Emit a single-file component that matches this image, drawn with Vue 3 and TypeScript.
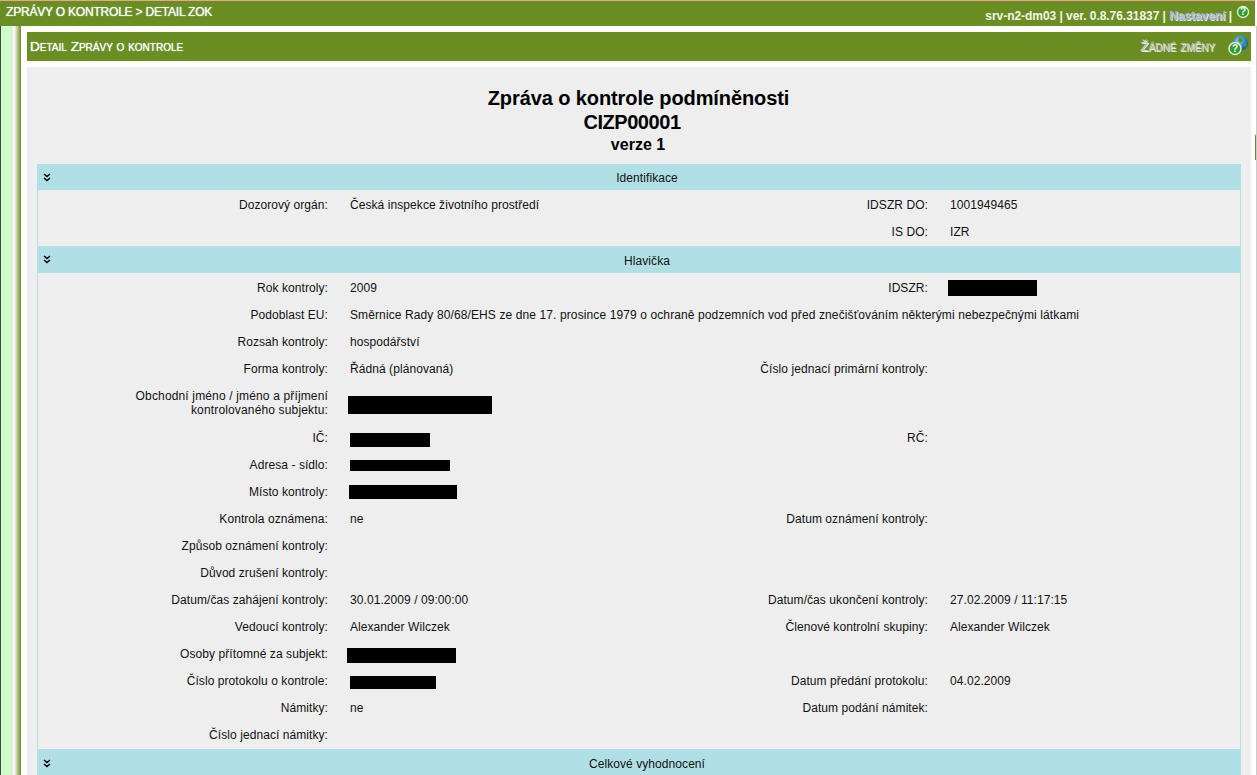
<script setup lang="ts">
interface Field {
  label: string
  value?: string
  black?: number[]
  label2?: string
  value2?: string
  black2?: number[]
  tall?: boolean
  wide?: boolean
}
interface Section {
  title: string
  rows: Field[]
}

const sections: Section[] = [
  {
    title: 'Identifikace',
    rows: [
      { label: 'Dozorový orgán:', value: 'Česká inspekce životního prostředí', label2: 'IDSZR DO:', value2: '1001949465' },
      { label: '', label2: 'IS DO:', value2: 'IZR' }
    ]
  },
  {
    title: 'Hlavička',
    rows: [
      { label: 'Rok kontroly:', value: '2009', label2: 'IDSZR:', black2: [89, 16, -2, 0] },
      { label: 'Podoblast EU:', wide: true, value: 'Směrnice Rady 80/68/EHS ze dne 17. prosince 1979 o ochraně podzemních vod před znečišťováním některými nebezpečnými látkami' },
      { label: 'Rozsah kontroly:', value: 'hospodářství' },
      { label: 'Forma kontroly:', value: 'Řádná (plánovaná)', label2: 'Číslo jednací primární kontroly:' },
      { label: 'Obchodní jméno / jméno a příjmení kontrolovaného subjektu:', tall: true, black: [144, 18, -2, 7] },
      { label: 'IČ:', black: [80, 14, 0, 5], label2: 'RČ:' },
      { label: 'Adresa - sídlo:', black: [100, 11, 0, 2] },
      { label: 'Místo kontroly:', black: [108, 14, -1, 0] },
      { label: 'Kontrola oznámena:', value: 'ne', label2: 'Datum oznámení kontroly:' },
      { label: 'Způsob oznámení kontroly:' },
      { label: 'Důvod zrušení kontroly:' },
      { label: 'Datum/čas zahájení kontroly:', value: '30.01.2009 / 09:00:00', label2: 'Datum/čas ukončení kontroly:', value2: '27.02.2009 / 11:17:15' },
      { label: 'Vedoucí kontroly:', value: 'Alexander Wilczek', label2: 'Členové kontrolní skupiny:', value2: 'Alexander Wilczek' },
      { label: 'Osoby přítomné za subjekt:', black: [109, 15, -3, 4] },
      { label: 'Číslo protokolu o kontrole:', black: [86, 13, 0, 4], label2: 'Datum předání protokolu:', value2: '04.02.2009' },
      { label: 'Námitky:', value: 'ne', label2: 'Datum podání námitek:' },
      { label: 'Číslo jednací námitky:' }
    ]
  },
  { title: 'Celkové vyhodnocení', rows: [] }
]

function blackStyle(b: number[]) {
  return { width: b[0] + 'px', height: b[1] + 'px', marginLeft: b[2] + 'px', marginTop: b[3] + 'px' }
}
</script>

<template>
  <div class="page">
    <header class="topbar">
      <div class="crumb">ZPRÁVY O KONTROLE &gt; DETAIL ZOK</div>
      <div class="server">
        srv-n2-dm03 | ver. 0.8.76.31837 | <span class="link">Nastavení</span> |
        <svg class="help-top" width="14" height="14" viewBox="0 0 14 14">
          <circle cx="7" cy="7" r="5.5" fill="#2f9e2f" stroke="#e6f5e0" stroke-width="1.3" />
          <text x="7" y="10.3" text-anchor="middle" class="q">?</text>
        </svg>
      </div>
    </header>
    <div class="main">
      <div class="gutter">
        <div class="g-dark"></div>
        <div class="g-pale"></div>
        <div class="g-fade"></div>
      </div>
      <div class="column">
        <div class="title-bar">
          <div class="title-text">Detail Zprávy o kontrole</div>
          <div class="title-right">
            <span class="changes">Žádné změny</span>
          </div>
          <svg class="help-globe" width="24" height="24" viewBox="0 0 24 24">
            <defs>
              <radialGradient id="globe" cx="0.4" cy="0.35" r="0.7">
                <stop offset="0" stop-color="#9fd0f5" />
                <stop offset="0.6" stop-color="#2f7fc8" />
                <stop offset="1" stop-color="#14508f" />
              </radialGradient>
            </defs>
            <circle cx="14.5" cy="10" r="7.5" fill="url(#globe)" />
            <path d="M13 4l3 1 1 3-3 2-2-2zM18 10l3 1-1 3-2-1z" fill="#3f9a4a" />
            <circle cx="9" cy="15.5" r="6" fill="#2f9e2f" stroke="#e3efd8" stroke-width="1.5" />
            <text x="9" y="19.2" text-anchor="middle" class="q">?</text>
          </svg>
        </div>
        <div class="sheet">
          <h1 class="doc-title">Zpráva o kontrole podmíněnosti<br /><span class="doc-code">CIZP00001</span></h1>
          <h2 class="doc-version">verze 1</h2>
          <section v-for="s in sections" :key="s.title" class="section">
            <div class="sec-head">
              <svg class="chev" width="8" height="9" viewBox="0 0 8 9">
                <path d="M1 1l3 2.5L7 1M1 5l3 2.5L7 5" fill="none" stroke="#000" stroke-width="1.6" />
              </svg>
              <span class="sec-title">{{ s.title }}</span>
            </div>
            <div v-if="s.rows.length" class="sec-body">
              <div v-for="(r, i) in s.rows" :key="i" class="row" :class="{ tall: r.tall }">
                <div class="lab" :class="{ lab1: r.tall }">{{ r.label }}</div>
                <div class="val" :class="{ wide: r.wide }">
                  <span v-if="r.black" class="black" :style="blackStyle(r.black)"></span>
                  <template v-else>{{ r.value }}</template>
                </div>
                <template v-if="!r.wide">
                  <div class="lab">{{ r.label2 }}</div>
                  <div class="val">
                    <span v-if="r.black2" class="black" :style="blackStyle(r.black2)"></span>
                    <template v-else>{{ r.value2 }}</template>
                  </div>
                </template>
              </div>
            </div>
          </section>
        </div>
      </div>
      <div class="edge"><i class="edge-mark"></i></div>
    </div>
  </div>
</template>

<style>
html, body { margin: 0; background: #fff; overflow: hidden; }
</style>

<style scoped>
.page {
  height: 775px;
  display: flex;
  flex-direction: column;
  overflow: hidden;
  font-family: "Liberation Sans", Arial, sans-serif;
  font-size: 12px;
  color: #111;
}
.topbar {
  flex: none;
  height: 25px;
  margin-right: 2px;
  background: #6b8e23;
  border-top: 1px solid #e9a58f;
  display: flex;
  justify-content: space-between;
  color: #fff;
}
.crumb {
  padding: 4px 0 0 6px;
  font-size: 12px;
  line-height: 14px;
  letter-spacing: -0.2px;
  text-shadow: 0 0 1px #dff;
}
.server {
  padding: 8px 23px 0 0;
  font-weight: bold;
  line-height: 14px;
  white-space: nowrap;
  position: relative;
  letter-spacing: -0.05px;
  color: #f4f4ec;
}
.link { color: #a9b6da; text-shadow: 1px 1px 0 #e8e8f0; font-weight: bold; }
.help-top { position: absolute; right: 5px; top: 4px; }
.q { font: bold 10px "Liberation Sans", sans-serif; fill: #fff; }
.main { flex: 1; display: flex; min-height: 0; position: relative; }
.gutter { flex: none; width: 21px; display: flex; }
.g-dark { width: 1px; background: #444; }
.g-pale { width: 10px; background: #ccffcc; }
.g-fade { width: 10px; background: linear-gradient(to right, #dcdcd0, #f6f6f0 20%, #fff 30%, #6b8e23); }
.column { flex: none; width: 1224px; margin-left: 6px; padding-top: 6px; display: flex; flex-direction: column; }
.title-bar {
  flex: none;
  height: 29px;
  background: #6b8e23;
  display: flex;
  justify-content: space-between;
  align-items: center;
  color: #fff;
  position: relative;
}
.title-text {
  padding-left: 3px;
  font-variant: small-caps;
  font-size: 13.6px;
  text-shadow: 0 0 1px #dff;
}
.title-right { padding-right: 36px; }
.changes {
  font-variant: small-caps;
  font-size: 13.6px;
  color: #c8c8c8;
  text-shadow: 1px 1px 0 #f0f0f0;
}
.help-globe { position: absolute; right: 1px; top: 1px; }
.sheet { flex: 1; margin-top: 6px; background: #eee; padding: 0 10px; }
.doc-title {
  margin: 19px 0 0;
  padding-right: 1px;
  font-size: 20px;
  line-height: 24px;
  text-align: center;
  letter-spacing: -0.1px;
  color: #000;
  font-weight: bold;
}
.doc-code { display: inline-block; padding-right: 13px; letter-spacing: -0.45px; }
.doc-version {
  margin: 1px 0 10px;
  padding-right: 2px;
  font-size: 16px;
  line-height: 19px;
  text-align: center;
  color: #000;
  font-weight: bold;
}
.section { display: block; }
.sec-head {
  height: 26px;
  background: #b0e0e6;
  display: flex;
  align-items: center;
}
.section:nth-of-type(2) .sec-head { height: 27px; }
.section:nth-of-type(3) .sec-head { height: 28px; }
.chev { flex: none; margin: 0 2px 0 6px; }
.sec-title { flex: 1; margin-top: 2px; text-align: center; letter-spacing: 0.07px; }
.sec-body { border: solid #b0e0e6; border-width: 0 1px; padding: 1px 0; }
.row {
  height: 27px;
  display: grid;
  grid-template-columns: 290px 360px 196px 1fr;
  column-gap: 22px;
  align-items: center;
  white-space: nowrap;
  letter-spacing: 0.07px;
}
.row.tall { height: 42px; align-items: start; padding-top: 7px; box-sizing: border-box; }
.lab { text-align: right; }
.lab1 { white-space: normal; padding-left: 80px; line-height: 14px; letter-spacing: 0.15px; }
.val.wide { grid-column: 2 / -1; letter-spacing: 0.11px; }
.black { display: block; background: #000; }
.edge { flex: none; width: 6px; position: relative; border-right: 1px solid #ccc; box-sizing: border-box; }
.edge-mark { position: absolute; right: 0; top: 109px; width: 1px; height: 25px; background: #6b8e23; }
</style>
